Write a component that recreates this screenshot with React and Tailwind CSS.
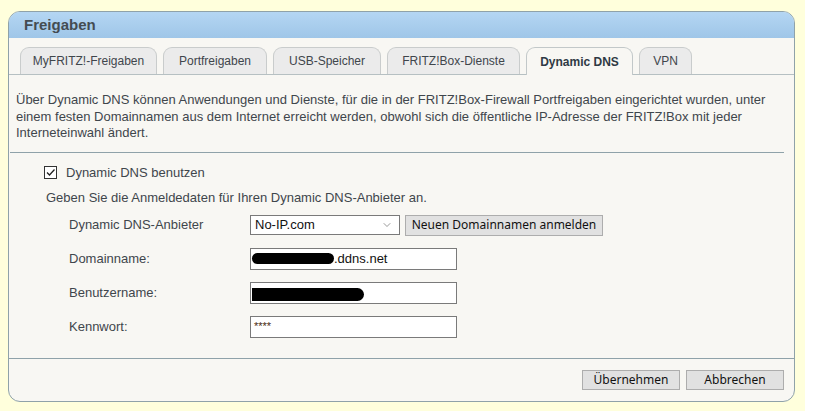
import { ChevronDown } from "lucide-react";

const tabs = [
  { label: "MyFRITZ!-Freigaben", w: "w-[137px]" },
  { label: "Portfreigaben", w: "w-[104px]" },
  { label: "USB-Speicher", w: "w-[108px]" },
  { label: "FRITZ!Box-Dienste", w: "w-[133px]" },
  { label: "Dynamic DNS", w: "w-[107px]", active: true },
  { label: "VPN", w: "w-[53px]" },
];

const Redacted = ({ w }) => (
  <span className={`inline-block h-[11px] ${w} rounded-full bg-black align-middle`} />
);

export default function App() {
  return (
    <div className="flex h-[411px] w-[840px] bg-white font-['Liberation_Sans',Arial,sans-serif] text-[13px] text-[#3f464c]">
      <div className="h-full w-[805px] bg-[#ffffdc] pl-[8px] pr-[10px] pt-[11px]">
        <div className="flex h-[391px] flex-col overflow-hidden rounded-[12px] border border-[#8fa2a9] bg-[#f8f7f3]">
          {/* Header */}
          <div className="flex h-[26px] items-center bg-gradient-to-b from-[#b4d6f3] to-[#9fc6e8] pl-[15px] text-[15px] font-bold text-[#444c52]">
            Freigaben
          </div>

          {/* Tabs */}
          <div className="flex h-[37px] items-end gap-[6px] border-b border-[#b6c0c2] pl-[11px]">
            {tabs.map((t) => (
              <div
                key={t.label}
                className={`${t.w} flex h-[27px] items-center justify-center rounded-t-[9px] border border-b-0 text-[12px] ${
                  t.active
                    ? "relative -mb-px h-[28px] border-[#c2c8c9] bg-[#f8f7f3] font-bold text-[#2f3a44]"
                    : "border-[#c9cccc] bg-[#ebebeb] text-[#3f464c]"
                }`}
              >
                {t.label}
              </div>
            ))}
          </div>

          {/* Content */}
          <div className="flex flex-1 flex-col pl-[7px] pt-[17px]">
            <p className="leading-[16.5px]">
              Über Dynamic DNS können Anwendungen und Dienste, für die in der FRITZ!Box-Firewall Portfreigaben eingerichtet wurden, unter
              <br />
              einem festen Domainnamen aus dem Internet erreicht werden, obwohl sich die öffentliche IP-Adresse der FRITZ!Box mit jeder
              <br />
              Interneteinwahl ändert.
            </p>
            <div className="mr-[10px] ml-[-6px] mt-[10px] border-t border-[#8fa2a9]" />

            <label className="ml-[28px] mt-[10px] flex items-center gap-[9px]">
              <span className="flex h-[13px] w-[13px] items-center justify-center border border-[#333] bg-white">
                <svg width="11" height="11" viewBox="0 0 11 11" fill="none">
                  <path d="M2 5.5 L4.5 8 L9.5 2.5" stroke="#222" strokeWidth="1.3" />
                </svg>
              </span>
              <span>Dynamic DNS benutzen</span>
            </label>
            <p className="ml-[30px] mt-[6px]">Geben Sie die Anmeldedaten für Ihren Dynamic DNS-Anbieter an.</p>

            <div className="ml-[53px] mt-[7px] grid grid-cols-[181px_auto] items-center gap-y-[12px]">
              <span>Dynamic DNS-Anbieter</span>
              <div className="flex items-center gap-[5px]">
                <div className="flex h-[20px] w-[150px] items-center justify-between border border-[#7a7a7a] bg-white pl-[4px] pr-[6px] text-[#111]">
                  <span>No-IP.com</span>
                  <ChevronDown size={12} strokeWidth={1.2} className="text-[#555]" />
                </div>
                <button className="h-[21px] w-[198px] border border-[#adadad] bg-[#e1e1e1] font-['Noto_Sans',sans-serif] text-[12px] text-[#111]">
                  Neuen Domainnamen anmelden
                </button>
              </div>

              <span>Domainname:</span>
              <div className="flex h-[22px] w-[207px] items-center border border-[#7a7a7a] bg-white pl-[1px] text-[#111]">
                <Redacted w="w-[82px]" />
                <span>.ddns.net</span>
              </div>

              <span>Benutzername:</span>
              <div className="flex h-[22px] w-[207px] items-center border border-[#7a7a7a] bg-white text-[#111]">
                <span className="ml-[1px] mt-[3px] inline-block h-[13px] w-[112px] rounded-r-full rounded-l-[3px] bg-black" />
              </div>

              <span>Kennwort:</span>
              <div className="flex h-[22px] w-[207px] items-center border border-[#7a7a7a] bg-white pl-[3px] text-[11px] leading-none tracking-[0px] text-[#4a2a10]">
                ****
              </div>
            </div>
          </div>

          {/* Footer */}
          <div className="flex h-[43px] items-start justify-end gap-[6px] border-t border-[#8fa2a9] pr-[10px] pt-[11px]">
            <button className="h-[20px] w-[98px] border border-[#adadad] bg-[#e1e1e1] font-['Noto_Sans',sans-serif] text-[12px] text-[#111]">
              Übernehmen
            </button>
            <button className="h-[20px] w-[98px] border border-[#adadad] bg-[#e1e1e1] font-['Noto_Sans',sans-serif] text-[12px] text-[#111]">
              Abbrechen
            </button>
          </div>
        </div>
      </div>
    </div>
  );
}
